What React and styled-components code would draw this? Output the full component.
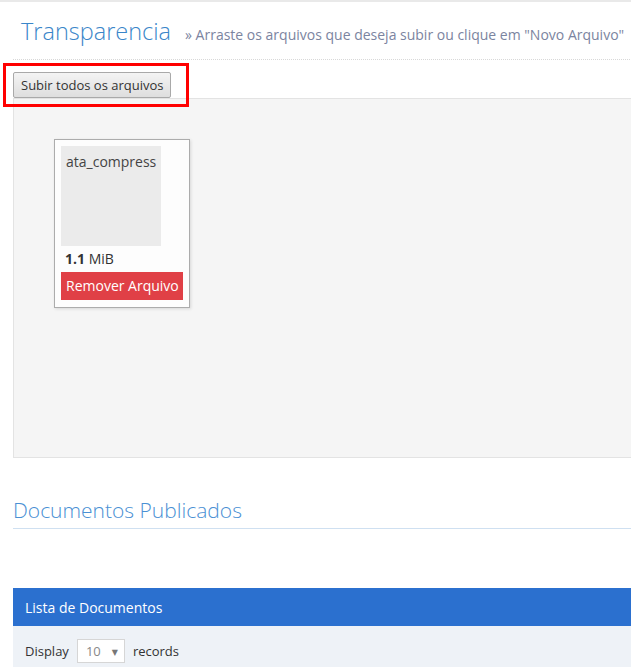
import React from 'react'
import styled, { createGlobalStyle } from 'styled-components'

const GlobalStyle = createGlobalStyle`
  html, body {
    margin: 0;
    padding: 0;
    background: #fff;
    overflow: hidden;
  }
  body {
    font-family: 'Open Sans', 'DejaVu Sans', sans-serif;
    color: #333;
  }
`

const Page = styled.div`
  width: 660px;
  border-top: 2px solid #e9e9e9;
  padding-left: 13px;
  box-sizing: border-box;
`

const PageHeader = styled.div`
  display: flex;
  align-items: baseline;
  height: 58px;
  padding: 13px 0 0 8px;
  box-sizing: border-box;
  border-bottom: 1px dotted #d8d8d8;
`

const Title = styled.h1`
  margin: 0;
  font-size: 23.5px;
  font-weight: 300;
  color: #3a86c9;
`

const Subtitle = styled.span`
  margin-left: 14px;
  font-size: 14px;
  color: #7b84a0;
  white-space: nowrap;
`

const Toolbar = styled.div`
  position: relative;
  height: 38px;
  padding-top: 12px;
  box-sizing: border-box;
`

const Highlight = styled.div`
  position: absolute;
  left: -10px;
  top: 3px;
  width: 180px;
  height: 38px;
  border: 3px solid #f00;
  pointer-events: none;
`

const GrayButton = styled.button`
  font-family: inherit;
  font-size: 13px;
  color: #333;
  height: 26px;
  padding: 0 7px;
  border: 1px solid #a9a9a9;
  border-radius: 2px;
  background: linear-gradient(#f4f4f4, #dedede);
  cursor: pointer;
`

const DropZone = styled.div`
  height: 360px;
  background: #f5f5f5;
  border: 1px solid #e3e3e3;
  box-sizing: border-box;
  padding: 40px 0 0 40px;
`

const FileCard = styled.div`
  width: 136px;
  height: 169px;
  box-sizing: border-box;
  background: #fdfdfd;
  border: 1px solid #acacac;
  box-shadow: 1px 1px 3px rgba(0, 0, 0, 0.12);
  padding: 6px;
  display: flex;
  flex-direction: column;
`

const Thumb = styled.div`
  width: 100px;
  height: 100px;
  background: #ebebeb;
  padding: 5px;
  box-sizing: border-box;
  font-size: 14px;
  color: #444;
  line-height: 22px;
`

const Size = styled.div`
  font-size: 14px;
  color: #333;
  padding: 2px 0 0 4px;
  height: 26px;
  box-sizing: border-box;
  line-height: 22px;
  b { font-weight: 700; }
`

const RemoveButton = styled.a`
  display: block;
  background: #e04046;
  color: #fff;
  font-size: 14px;
  line-height: 28px;
  padding-left: 5px;
  white-space: nowrap;
  width: 122px;
  box-sizing: border-box;
`

const SectionTitle = styled.h3`
  margin: 37px 0 0;
  font-size: 21px;
  font-weight: 300;
  color: #4a90d4;
  padding-bottom: 3px;
  border-bottom: 1px solid #cfe0f1;
  line-height: 30px;
`

const PanelHead = styled.div`
  margin-top: 59px;
  height: 38px;
  background: #2b70cf;
  color: #fff;
  font-size: 14px;
  display: flex;
  align-items: center;
  padding-left: 12px;
`

const PanelBody = styled.div`
  background: #eef2f7;
  height: 50px;
  display: flex;
  align-items: center;
  padding-left: 12px;
  font-size: 13px;
  color: #333;
  gap: 8px;
`

const SelectBox = styled.div`
  width: 48px;
  height: 24px;
  box-sizing: border-box;
  background: #fff;
  border: 1px solid #d6d6d6;
  display: flex;
  align-items: center;
  justify-content: space-between;
  padding: 0 6px 0 8px;
  font-size: 13px;
  color: #888;
  span { font-size: 8px; color: #777; }
`

export default function App() {
  return (
    <>
      <GlobalStyle />
      <Page>
        <PageHeader>
          <Title>Transparencia</Title>
          <Subtitle>» Arraste os arquivos que deseja subir ou clique em "Novo Arquivo"</Subtitle>
        </PageHeader>
        <Toolbar>
          <Highlight />
          <GrayButton>Subir todos os arquivos</GrayButton>
        </Toolbar>
        <DropZone>
          <FileCard>
            <Thumb>ata_compress</Thumb>
            <Size><b>1.1</b> MiB</Size>
            <RemoveButton>Remover Arquivo</RemoveButton>
          </FileCard>
        </DropZone>
        <SectionTitle>Documentos Publicados</SectionTitle>
        <PanelHead>Lista de Documentos</PanelHead>
        <PanelBody>
          Display
          <SelectBox>10<span>▼</span></SelectBox>
          records
        </PanelBody>
      </Page>
    </>
  )
}
